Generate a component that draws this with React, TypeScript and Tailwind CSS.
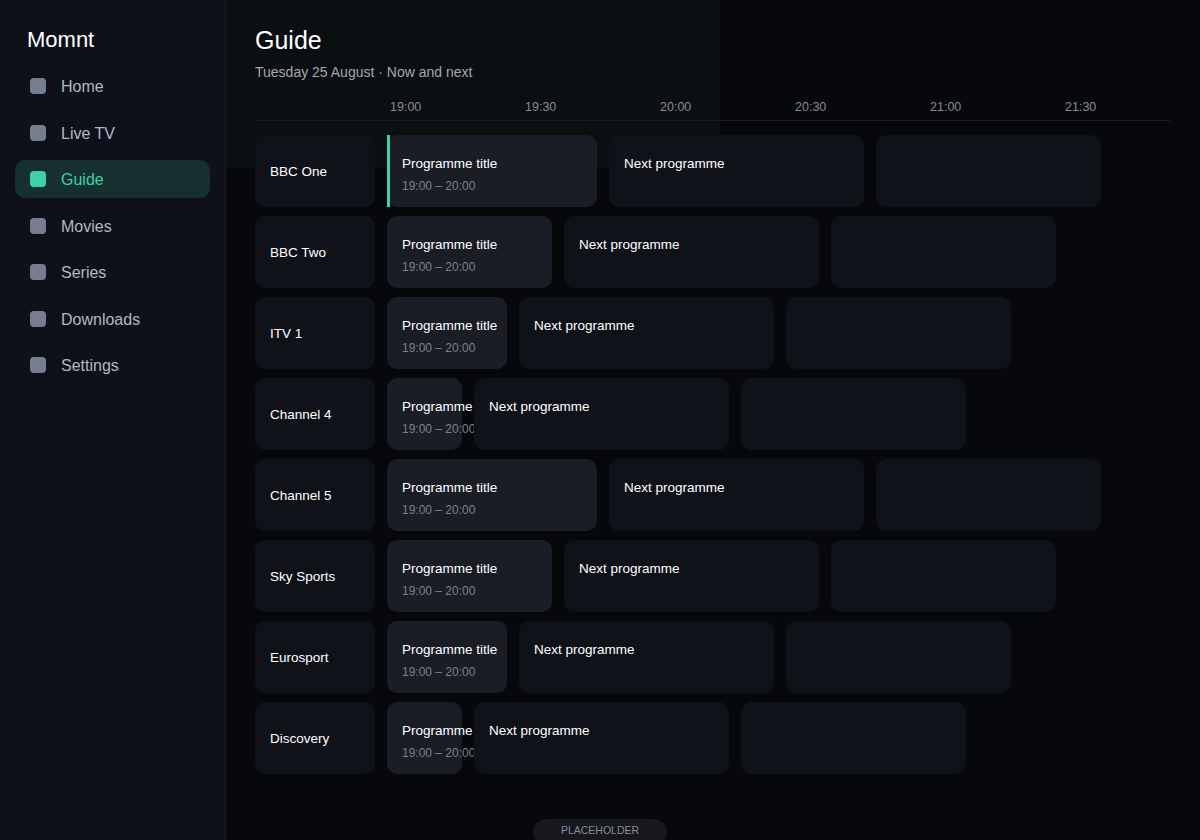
import { FC } from "react";

const navItems = ["Home", "Live TV", "Guide", "Movies", "Series", "Downloads", "Settings"];

const times = ["19:00", "19:30", "20:00", "20:30", "21:00", "21:30"];

const channels = [
  { name: "BBC One", now: 210, live: true },
  { name: "BBC Two", now: 165 },
  { name: "ITV 1", now: 120 },
  { name: "Channel 4", now: 75 },
  { name: "Channel 5", now: 210 },
  { name: "Sky Sports", now: 165 },
  { name: "Eurosport", now: 120 },
  { name: "Discovery", now: 75 },
];

const NavItem: FC<{ label: string; active?: boolean }> = ({ label, active }) => (
  <a
    href="#"
    className={
      active
        ? "flex h-[38px] items-center gap-[15px] rounded-[10px] bg-[#15302e] px-[15px] text-[#3dd1aa]"
        : "flex h-[38px] items-center gap-[15px] rounded-[10px] px-[15px] text-[#b3b8c4]"
    }
  >
    <span
      className={
        active
          ? "h-4 w-4 rounded-[4px] bg-[#3dd1aa]"
          : "h-4 w-4 rounded-[4px] bg-[#767d8f]"
      }
    />
    <span className="pt-[2px] text-[16px] leading-5">{label}</span>
  </a>
);

const GuideRow: FC<{ name: string; now: number; live?: boolean }> = ({ name, now, live }) => (
  <div className="flex h-[72px] gap-3">
    <div className="flex w-[120px] shrink-0 items-center rounded-[10px] bg-[#10121a] px-[15px] pt-[3px] text-[13.5px] text-white">
      {name}
    </div>
    <div
      className="relative shrink-0 whitespace-nowrap rounded-[10px] bg-[#1a1d26] px-[15px] pt-[19px]"
      style={{ width: now }}
    >
      {live && <span className="absolute bottom-0 left-0 top-0 w-[3px] bg-[#3dd1aa]" />}
      <div className="text-[13.5px] leading-5 text-white">Programme title</div>
      <div className="mt-1 text-[12px] leading-4 text-[#7b808e]">19:00 – 20:00</div>
    </div>
    <div className="relative w-[255px] shrink-0 whitespace-nowrap rounded-[10px] bg-[#10121a] px-[15px] pt-[19px]">
      <div className="text-[13.5px] leading-5 text-white">Next programme</div>
    </div>
    <div className="relative w-[225px] shrink-0 rounded-[10px] bg-[#10121a]" />
  </div>
);

export default function App() {
  return (
    <div className="relative flex h-[840px] w-[1200px] overflow-hidden bg-[#07080b] font-['Liberation_Sans',Arial,sans-serif]">
      <aside className="w-[226px] shrink-0 border-r border-[#1a1d25] bg-[#0f111a] px-[15px] pt-[27px]">
        <div className="pl-3 text-[22px] leading-[26px] text-white">Momnt</div>
        <nav className="mt-[14px] flex flex-col gap-[8.5px]">
          {navItems.map((item) => (
            <NavItem key={item} label={item} active={item === "Guide"} />
          ))}
        </nav>
      </aside>

      <main className="relative min-w-0 flex-1 pl-[29px] pr-[30px]">
        {/* soft panel behind the heading */}
        <div className="absolute left-0 top-0 h-[168px] w-[494px] bg-[#0a0f12]" />

        <div className="relative">
          <h1 className="pt-[25px] text-[25px] leading-[30px] text-white">Guide</h1>
          <p className="mt-[7px] text-[14px] leading-5 text-[#a3a7b1]">
            Tuesday 25 August · Now and next
          </p>

          <div className="mt-[17px] flex border-b border-[#1a1d24] pb-[5px]">
            <div className="w-[132px] shrink-0" />
            {times.map((t) => (
              <div key={t} className="w-[135px] shrink-0 pl-[3px] text-[12.5px] leading-4 text-[#878c98]">
                {t}
              </div>
            ))}
          </div>

          <div className="mt-[14px] flex flex-col gap-[9px]">
            {channels.map((c) => (
              <GuideRow key={c.name} name={c.name} now={c.now} live={c.live} />
            ))}
          </div>
        </div>
      </main>

      <div className="absolute left-1/2 top-[819px] flex h-[27px] w-[134px] -translate-x-1/2 justify-center rounded-full bg-[#16181e] pt-[5px] text-[10.5px] leading-3 text-[#878c99]">
        PLACEHOLDER
      </div>
    </div>
  );
}
